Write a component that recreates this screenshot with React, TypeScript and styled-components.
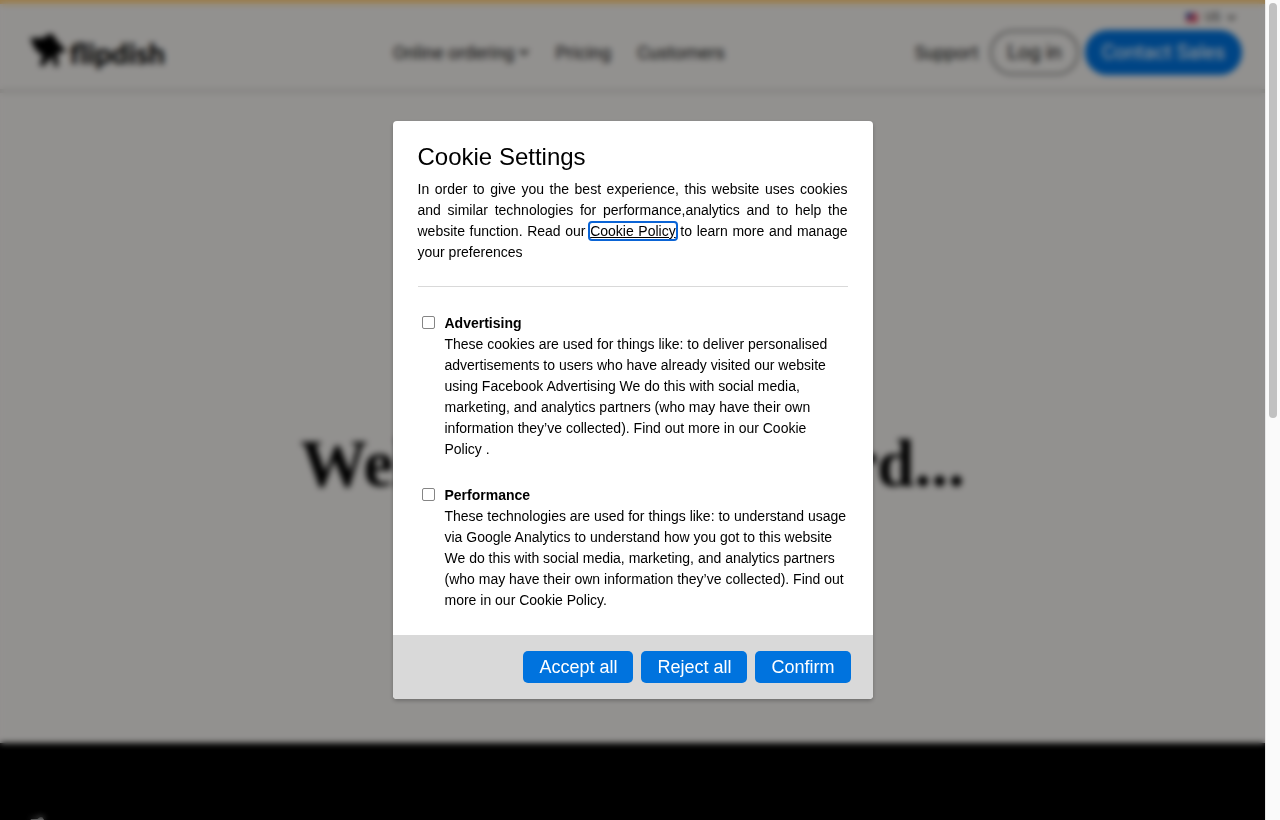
import React from "react";
import styled, { createGlobalStyle } from "styled-components";

const GlobalStyle = createGlobalStyle`
  *, *::before, *::after { box-sizing: border-box; }
  body {
    margin: 0;
    color: #000;
    background: #fafafa;
    font-family: "Liberation Sans", Helvetica, Arial, sans-serif;
  }
  h1, h2, p { margin: 0; }
`;

const Shell = styled.div`
  display: grid;
  grid-template-columns: minmax(0, 1fr) 15px;
  height: 100vh;
`;

const ScrollTrack = styled.div`
  padding: 3px;
  background: #fafafa;
  border-left: 1px solid #e8e8e8;
`;

const ScrollThumb = styled.div`
  width: 8px;
  height: 51%;
  border-radius: 4px;
  background: #c1c1c1;
`;

const Viewport = styled.div`
  position: relative;
  overflow: hidden;
`;

const Page = styled.div`
  display: flex;
  flex-direction: column;
  height: 100%;
  background: #f4f2ef;
  font-family: Roboto, "Liberation Sans", sans-serif;
`;

const Header = styled.header`
  display: flex;
  align-items: flex-end;
  padding: 7px 23px 14px 29px;
  border-top: 4px solid #ffd080;
  border-bottom: 4px solid #dcdad6;
`;

const Brand = styled.a`
  display: flex;
  align-items: center;
  gap: 2px;
  width: 136px;
  height: 46px;
  color: #000;
  font-family: Lato, sans-serif;
  font-size: 29px;
  font-weight: 900;
  text-decoration: none;
`;

const Nav = styled.nav`
  display: flex;
  align-items: center;
  gap: 26px;
  height: 46px;
  margin-left: 228px;
`;

const NavLink = styled.a`
  display: flex;
  align-items: center;
  gap: 5px;
  color: #111;
  font-size: 18px;
  font-weight: 400;
  text-decoration: none;
`;

const Account = styled.div`
  display: flex;
  flex-direction: column;
  align-items: flex-end;
  gap: 7px;
  margin-left: auto;
`;

const Locale = styled.button`
  display: flex;
  align-items: center;
  gap: 7px;
  height: 12px;
  margin-right: 6px;
  padding: 0;
  border: 0;
  background: none;
  color: #333;
  font: 400 12px Roboto, sans-serif;
`;

const Actions = styled.div`
  display: flex;
  align-items: center;
  gap: 6px;
`;

const SupportLink = styled(NavLink)`
  margin-right: 6px;
`;

const Pill = styled.a<{ $filled?: boolean }>`
  height: 45px;
  padding: 0 15px;
  border: 2px solid ${(p) => (p.$filled ? "#0073de" : "#777")};
  border-radius: 23px;
  background: ${(p) => (p.$filled ? "#0073de" : "transparent")};
  color: ${(p) => (p.$filled ? "#fff" : "#111")};
  font-size: 20px;
  font-weight: 400;
  line-height: 40px;
  text-decoration: none;
`;

const Hero = styled.main`
  flex: 1;
  display: flex;
  align-items: center;
  justify-content: center;
  padding-top: 90px;
`;

const HeroTitle = styled.h1`
  font-family: "Liberation Serif", serif;
  font-size: 67px;
  font-weight: 700;
  line-height: 80px;
  white-space: nowrap;
`;

const Footer = styled.footer`
  height: 77px;
  padding: 74px 30px 0;
  overflow: hidden;
  background: #000;
  color: #fff;
`;

const Overlay = styled.div`
  position: absolute;
  inset: 0;
  display: flex;
  align-items: center;
  justify-content: center;
  background: rgba(0, 0, 0, 0.4);
  backdrop-filter: blur(3px);
`;

const Dialog = styled.form`
  width: 480px;
  max-width: 100%;
  overflow: hidden;
  border-radius: 4px;
  background: #fff;
  box-shadow: 0 2px 4px rgba(0, 0, 0, 0.25);
  font-size: 14px;
  line-height: 21px;
`;

const DialogBody = styled.div`
  padding: 20px 25px 24px;
`;

const DialogTitle = styled.h2`
  margin-bottom: 6px;
  font-size: 24px;
  font-weight: 400;
  line-height: 32px;
`;

const Intro = styled.p`
  padding-bottom: 23px;
  border-bottom: 1px solid #d9d9d9;
  text-align: justify;
`;

const PolicyLink = styled.a`
  border-radius: 2px;
  outline: 2px solid #0a64d6;
  outline-offset: 0;
  color: #000;
`;

const Options = styled.div`
  display: grid;
  gap: 25px;
  margin-top: 26px;
`;

const Option = styled.div`
  display: flex;
  align-items: flex-start;
  gap: 10px;
  padding-left: 4px;
`;

const Checkbox = styled.input`
  appearance: none;
  flex: none;
  width: 13px;
  height: 13px;
  margin: 3px 0 0;
  border: 1px solid #858585;
  border-radius: 2px;
  background: #fff;
`;

const OptionName = styled.label`
  font-weight: 700;
`;

const DialogFooter = styled.div`
  display: flex;
  justify-content: flex-end;
  gap: 8px;
  padding: 16px 22px;
  background: #d9d9d9;
`;

const Button = styled.button`
  height: 32px;
  padding: 0 16px;
  border: 0;
  border-radius: 5px;
  background: #0073de;
  color: #fff;
  font: 18px "Liberation Sans", Helvetica, Arial, sans-serif;
`;

const Mark = ({ width }: { width: number }) => (
  <svg width={width} viewBox="0 0 38 36" fill="currentColor" aria-hidden="true">
    <path d="M1 4 L14 4 L22 -2 L27 6 L37 17 L28 19 L29 32 L25 32 L23 22 L14 32 L10 30 L14 22 L6 15 Z" />
  </svg>
);

const Chevron = ({ size }: { size: number }) => (
  <svg width={size} height={size} viewBox="0 0 10 10" fill="none" stroke="currentColor" strokeWidth="2" aria-hidden="true">
    <path d="M1 3 L5 7 L9 3" />
  </svg>
);

const Flag = () => (
  <svg width="12" height="9" viewBox="0 0 12 9" aria-hidden="true">
    <path fill="#fff" d="M0 0h12v9H0z" />
    <path fill="#d8203c" d="M0 0h12v2H0zM0 3h12v2H0zM0 6h12v3H0z" />
    <path fill="#26358c" d="M0 0h6v5H0z" />
  </svg>
);

const cookieOptions = [
  {
    id: "advertising",
    name: "Advertising",
    text: "These cookies are used for things like: to deliver personalised advertisements to users who have already visited our website using Facebook Advertising We do this with social media, marketing, and analytics partners (who may have their own information they’ve collected). Find out more in our Cookie Policy .",
  },
  {
    id: "performance",
    name: "Performance",
    text: "These technologies are used for things like: to understand usage via Google Analytics to understand how you got to this website We do this with social media, marketing, and analytics partners (who may have their own information they’ve collected). Find out more in our Cookie Policy.",
  },
];

export default function App() {
  return (
    <Shell>
      <GlobalStyle />
      <Viewport>
        <Page>
          <Header>
            <Brand href="#">
              <Mark width={39} />
              flipdish
            </Brand>
            <Nav>
              <NavLink href="#">
                Online ordering <Chevron size={10} />
              </NavLink>
              <NavLink href="#">Pricing</NavLink>
              <NavLink href="#">Customers</NavLink>
            </Nav>
            <Account>
              <Locale type="button">
                <Flag />
                US
                <Chevron size={9} />
              </Locale>
              <Actions>
                <SupportLink href="#">Support</SupportLink>
                <Pill href="#">Log in</Pill>
                <Pill href="#" $filled>
                  Contact Sales
                </Pill>
              </Actions>
            </Account>
          </Header>
          <Hero>
            <HeroTitle>Well, this is awkward...</HeroTitle>
          </Hero>
          <Footer>
            <Mark width={20} />
          </Footer>
        </Page>
        <Overlay>
          <Dialog role="dialog" aria-labelledby="cookie-title" onSubmit={(e) => e.preventDefault()}>
            <DialogBody>
              <DialogTitle id="cookie-title">Cookie Settings</DialogTitle>
              <Intro>
                In order to give you the best experience, this website uses cookies and similar technologies for
                performance,analytics and to help the website function. Read our{" "}
                <PolicyLink href="#">Cookie Policy</PolicyLink> to learn more and manage your preferences
              </Intro>
              <Options>
                {cookieOptions.map((option) => (
                  <Option key={option.id}>
                    <Checkbox type="checkbox" id={option.id} />
                    <div>
                      <OptionName htmlFor={option.id}>{option.name}</OptionName>
                      <p>{option.text}</p>
                    </div>
                  </Option>
                ))}
              </Options>
            </DialogBody>
            <DialogFooter>
              <Button type="button">Accept all</Button>
              <Button type="button">Reject all</Button>
              <Button type="submit">Confirm</Button>
            </DialogFooter>
          </Dialog>
        </Overlay>
      </Viewport>
      <ScrollTrack>
        <ScrollThumb />
      </ScrollTrack>
    </Shell>
  );
}
